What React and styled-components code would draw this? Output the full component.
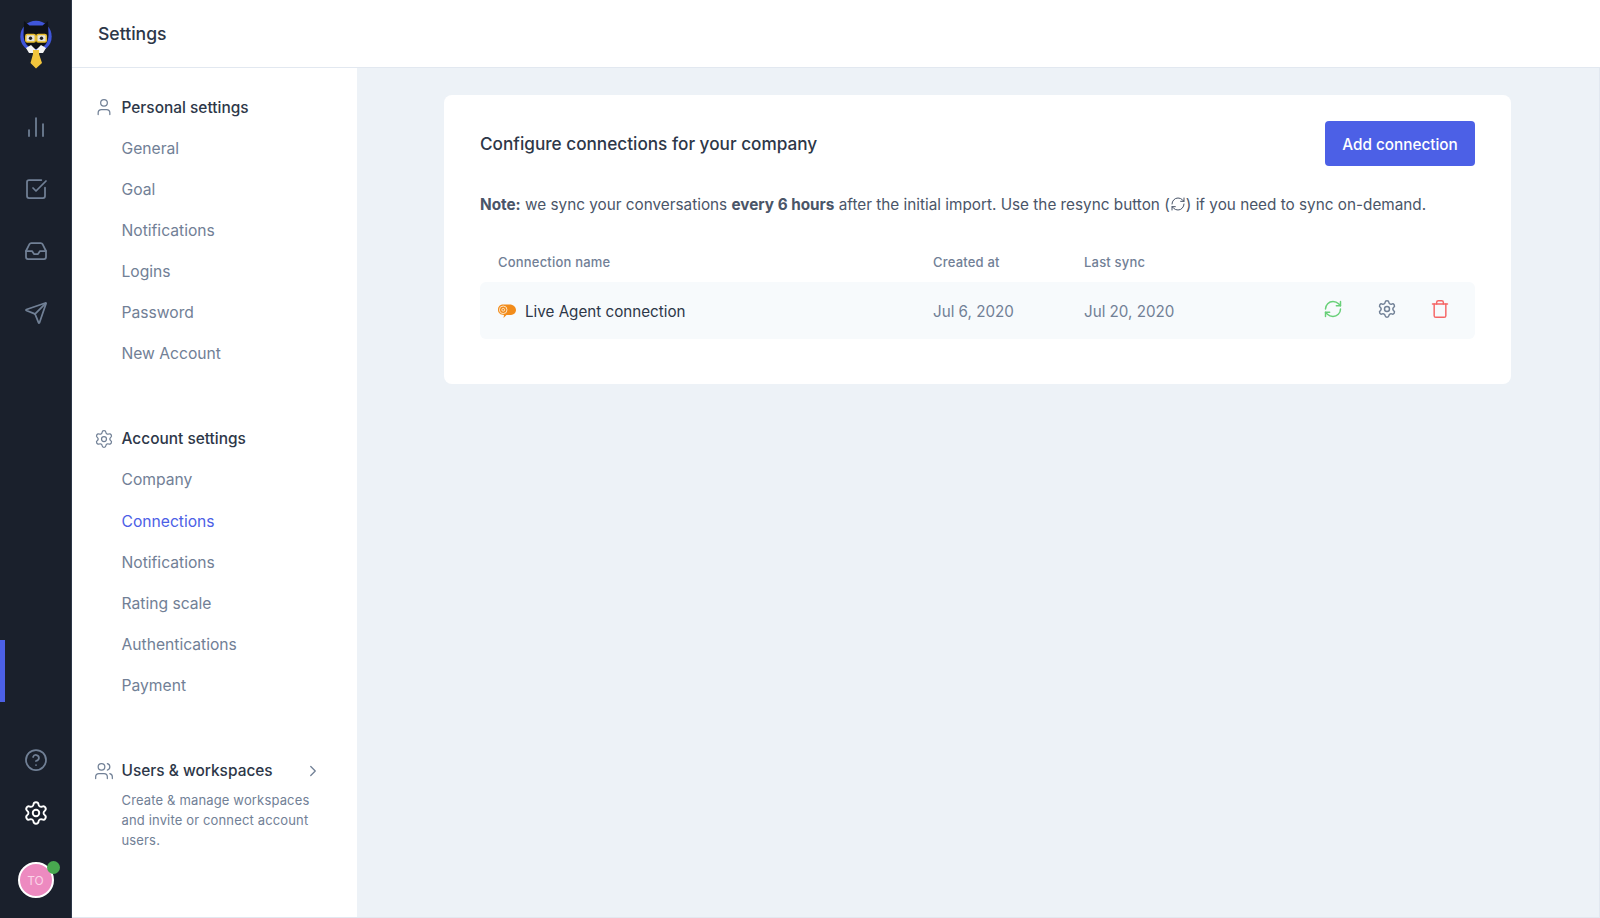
import React from "react";
import styled, { createGlobalStyle } from "styled-components";
import {
  BarChart2,
  CheckSquare,
  Inbox,
  Send,
  HelpCircle,
  Settings as Gear,
  User,
  Users,
  ChevronRight,
  RefreshCw,
  Trash,
} from "lucide-react";

const GlobalStyle = createGlobalStyle`
  html, body {
    margin: 0;
    padding: 0;
    height: 918px;
    overflow: hidden;
    font-family: Inter, "Liberation Sans", sans-serif;
    background: #edf2f7;
  }
  * { box-sizing: border-box; }
`;

const Page = styled.div`
  display: flex;
  width: 1600px;
  height: 918px;
`;

const Rail = styled.nav`
  width: 72px;
  flex: none;
  display: flex;
  flex-direction: column;
  align-items: center;
  background: #1a202c;
  border-right: 1px solid #2d3748;
  padding-top: 20px;
`;

const RailIcon = styled.div`
  width: 24px;
  height: 24px;
  display: flex;
  color: ${(p) => (p.$active ? "#ffffff" : "#718096")};
  margin-top: ${(p) => p.$top || 38}px;
  svg {
    flex: none;
    margin: ${(p) => (p.$active ? "-1px" : "0")};
  }
`;

const Indicator = styled.div`
  align-self: flex-start;
  width: 5px;
  height: 62px;
  margin-top: 315px;
  background: #4c60e6;
`;

const Avatar = styled.div`
  position: relative;
  width: 36px;
  height: 36px;
  margin-top: 37px;
  border-radius: 50%;
  background: #ed8ac0;
  border: 2px solid #fff;
  display: flex;
  align-items: center;
  justify-content: center;
  color: #fbd5e8;
  font-size: 12px;
`;

const OnlineDot = styled.span`
  position: absolute;
  top: -3px;
  right: -8px;
  width: 13px;
  height: 13px;
  border-radius: 50%;
  background: #48a84f;
`;

const Body = styled.div`
  flex: 1;
  display: flex;
  flex-direction: column;
  min-width: 0;
`;

const Header = styled.header`
  height: 68px;
  flex: none;
  display: flex;
  align-items: center;
  padding-left: 26px;
  padding-bottom: 1px;
  background: #fff;
  border-bottom: 1px solid #e2e8f0;
  color: #2d3748;
  font-size: 17.6px;
  font-weight: 500;
`;

const Columns = styled.div`
  flex: 1;
  display: flex;
  min-height: 0;
`;

const Panel = styled.aside`
  width: 285px;
  flex: none;
  background: #fff;
  padding-top: 27px;
  border-bottom: 1px solid #e2e8f0;
`;

const Group = styled.section`
  margin-bottom: 52.5px;
`;

const GroupTitle = styled.div`
  height: 24px;
  display: flex;
  align-items: center;
  padding-left: 21.5px;
  color: #2d3748;
  font-size: 15.45px;
  font-weight: 500;
  svg {
    color: #718096;
    margin-right: 8px;
    flex: none;
  }
`;

const NavList = styled.ul`
  list-style: none;
  margin: 8.7px 0 0;
  padding: 0;
`;

const NavItem = styled.li`
  height: 41.1px;
  padding-left: 49.5px;
  display: flex;
  align-items: center;
  font-size: 15.65px;
  color: ${(p) => (p.$active ? "#4c60e6" : "#718096")};
`;

const Chevron = styled(ChevronRight)`
  margin-left: 31px;
  margin-right: 0 !important;
`;

const Blurb = styled.p`
  margin: 7.5px 0 0;
  padding: 0 30px 0 49.5px;
  font-size: 13px;
  line-height: 20px;
  letter-spacing: 0.15px;
  color: #718096;
`;

const Main = styled.main`
  flex: 1;
  padding: 27px 0 0 87px;
  border-bottom: 1px solid #e2e8f0;
  border-right: 1px solid #e2e8f0;
`;

const Card = styled.div`
  width: 1067px;
  height: 289px;
  padding: 26px 36px;
  background: #fff;
  border-radius: 8px;
`;

const CardHead = styled.div`
  display: flex;
  align-items: center;
  justify-content: space-between;
`;

const CardTitle = styled.h2`
  margin: 0;
  font-size: 17.2px;
  font-weight: 500;
  color: #2d3748;
`;

const PrimaryButton = styled.button`
  width: 150px;
  height: 45px;
  border: 0;
  border-radius: 4px;
  padding: 1px 0 0;
  background: #4c60e6;
  color: #fff;
  font: 500 15.3px Inter, sans-serif;
`;

const Note = styled.p`
  margin: 27px 0 0;
  font-size: 15.3px;
  line-height: 24px;
  color: #4a5568;
  white-space: nowrap;
  b {
    font-weight: 700;
  }
  svg {
    vertical-align: -2px;
  }
`;

const TableGrid = styled.div`
  display: grid;
  grid-template-columns: 453px 151px 1fr;
  align-items: center;
`;

const TableHead = styled(TableGrid)`
  margin-top: 34px;
  height: 22px;
  font-size: 13px;
  font-weight: 500;
  letter-spacing: 0.2px;
  color: #718096;
  span:first-child {
    padding-left: 18px;
  }
`;

const TableRow = styled(TableGrid)`
  margin-top: 9px;
  height: 57px;
  padding-top: 1px;
  background: #f7fafc;
  border-radius: 6px;
  font-size: 15.2px;
  color: #718096;
`;

const NameCell = styled.div`
  display: flex;
  align-items: center;
  padding-left: 18px;
  color: #2d3748;
  svg {
    margin-right: 9px;
  }
`;

const RowFoot = styled.div`
  display: flex;
  align-items: center;
  justify-content: space-between;
`;

const RowActions = styled.div`
  display: flex;
  gap: 33.5px;
  padding: 0 25px 4px 0;
`;

const ActionBtn = styled.span`
  display: flex;
  color: ${(p) => p.$color};
`;

const CatLogo = () => (
  <svg width="34" height="49" viewBox="0 0 34 49" aria-hidden="true">
    <circle cx="17" cy="16.5" r="15.7" fill="#3f55d9" />
    <path d="M5 1 L10.5 5.5 H23.5 L29 1 L29.5 15 Q29 28 17 29 Q5 28 4.5 15 Z" fill="#0e1118" />
    <path d="M7 28 L12 25 L17 30 L22 25 L27 28 L24 33 H10 Z" fill="#f4f4f4" />
    <path d="M14 30 H20 L20 34 L23 43 L17 48.5 L11.500 43 L14 34 Z" fill="#f2c53d" />
    <rect x="6.8" y="14.500" width="9.500" height="7.500" rx="1.500" fill="#e4e4dc" stroke="#e8bd2e" strokeWidth="1.500" />
    <rect x="17.800" y="14.500" width="9.500" height="7.500" rx="1.500" fill="#e4e4dc" stroke="#e8bd2e" strokeWidth="1.500" />
    <circle cx="11.500" cy="18.200" r="1.700" fill="#222" />
    <circle cx="22.500" cy="18.200" r="1.700" fill="#222" />
  </svg>
);

const LiveAgentIcon = () => (
  <svg width="18" height="17" viewBox="0 0 18 17" aria-hidden="true">
    <path d="M5 1.5 H11.5 C15.5 1.5 18 4 18 7 C18 10 15.5 12 11.5 12 H8.5 L5.5 15 L6 12 C2.5 12 0 10 0 6.8 C0 3.6 2 1.5 5 1.5 Z" fill="#f28c1b" />
    <circle cx="5.2" cy="6.8" r="3.8" fill="none" stroke="#fde3c4" strokeWidth="1" />
    <circle cx="5.2" cy="6.8" r="1.4" fill="none" stroke="#fde3c4" strokeWidth="1" />
  </svg>
);

const railTop = [BarChart2, CheckSquare, Inbox, Send];
const personal = ["General", "Goal", "Notifications", "Logins", "Password", "New Account"];
const account = ["Company", "Connections", "Notifications", "Rating scale", "Authentications", "Payment"];

export default function App() {
  return (
    <Page>
      <GlobalStyle />
      <Rail>
        <CatLogo />
        {railTop.map((Icon, i) => (
          <RailIcon key={i} $top={i === 0 ? 46 : 38}>
            <Icon size={24} strokeWidth={1.75} />
          </RailIcon>
        ))}
        <Indicator />
        <RailIcon $top={46}>
          <HelpCircle size={24} strokeWidth={1.75} />
        </RailIcon>
        <RailIcon $active $top={29}>
          <Gear size={26} strokeWidth={1.75} />
        </RailIcon>
        <Avatar>
          TO
          <OnlineDot />
        </Avatar>
      </Rail>
      <Body>
        <Header>Settings</Header>
        <Columns>
          <Panel>
            <Group>
              <GroupTitle>
                <User size={20} strokeWidth={1.5} />
                Personal settings
              </GroupTitle>
              <NavList>
                {personal.map((n) => (
                  <NavItem key={n}>{n}</NavItem>
                ))}
              </NavList>
            </Group>
            <Group>
              <GroupTitle>
                <Gear size={20} strokeWidth={1.5} />
                Account settings
              </GroupTitle>
              <NavList>
                {account.map((n) => (
                  <NavItem key={n} $active={n === "Connections"}>
                    {n}
                  </NavItem>
                ))}
              </NavList>
            </Group>
            <Group>
              <GroupTitle>
                <Users size={20} strokeWidth={1.5} />
                Users &amp; workspaces
                <Chevron size={18} strokeWidth={1.75} />
              </GroupTitle>
              <Blurb>Create &amp; manage workspaces and invite or connect account users.</Blurb>
            </Group>
          </Panel>
          <Main>
            <Card>
              <CardHead>
                <CardTitle>Configure connections for your company</CardTitle>
                <PrimaryButton>Add connection</PrimaryButton>
              </CardHead>
              <Note>
                <b>Note:</b> we sync your conversations <b>every 6 hours</b> after the initial import. Use the resync button (
                <RefreshCw size={16} strokeWidth={1.5} />) if you need to sync on-demand.
              </Note>
              <TableHead>
                <span>Connection name</span>
                <span>Created at</span>
                <span>Last sync</span>
              </TableHead>
              <TableRow>
                <NameCell>
                  <LiveAgentIcon />
                  Live Agent connection
                </NameCell>
                <div>Jul 6, 2020</div>
                <RowFoot>
                  <div>Jul 20, 2020</div>
                  <RowActions>
                    <ActionBtn $color="#68d078">
                      <RefreshCw size={20} strokeWidth={1.75} />
                    </ActionBtn>
                    <ActionBtn $color="#718096">
                      <Gear size={20} strokeWidth={1.75} />
                    </ActionBtn>
                    <ActionBtn $color="#f56565">
                      <Trash size={20} strokeWidth={1.75} />
                    </ActionBtn>
                  </RowActions>
                </RowFoot>
              </TableRow>
            </Card>
          </Main>
        </Columns>
      </Body>
    </Page>
  );
}
